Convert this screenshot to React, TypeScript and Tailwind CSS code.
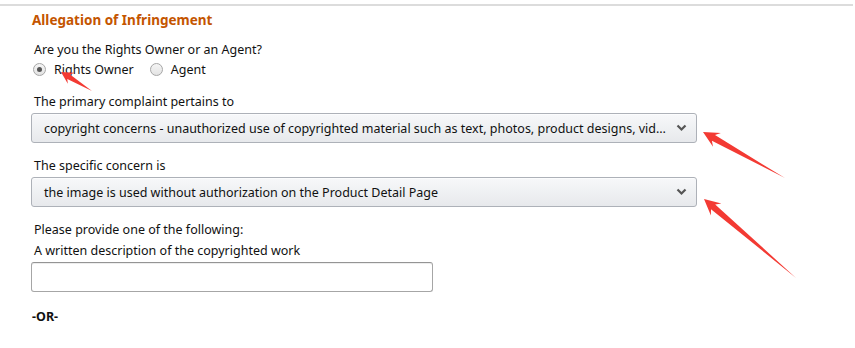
import React from 'react'

type Pt = [number, number]

// annotation arrow: tapered shaft from tail to tip with a swept head
function arrowPoints(tip: Pt, tail: Pt, head: number, half: number) {
  const dx = tip[0] - tail[0]
  const dy = tip[1] - tail[1]
  const len = Math.hypot(dx, dy)
  const ux = dx / len, uy = dy / len
  const nx = -uy, ny = ux
  const bx = tip[0] - ux * head, by = tip[1] - uy * head
  const nbx = tip[0] - ux * head * 0.75, nby = tip[1] - uy * head * 0.75
  const shaft = half * 0.4
  const pts: Pt[] = [
    tail,
    [nbx + nx * shaft, nby + ny * shaft],
    [bx + nx * half, by + ny * half],
    tip,
    [bx - nx * half, by - ny * half],
    [nbx - nx * shaft, nby - ny * shaft],
  ]
  return pts.map(p => p[0].toFixed(1) + ',' + p[1].toFixed(1)).join(' ')
}

const arrows: { tip: Pt; tail: Pt; head: number; half: number }[] = [
  { tip: [61, 72], tail: [92, 91], head: 12, half: 6.5 },
  { tip: [703, 132], tail: [785, 178], head: 16, half: 8 },
  { tip: [704, 199], tail: [796, 278], head: 16, half: 8 },
]

function Chevron() {
  return (
    <svg width="11" height="8" viewBox="0 0 11 8" fill="none">
      <path d="M1.5 1.5 L5.5 5.5 L9.5 1.5" stroke="#555" strokeWidth="2.2" />
    </svg>
  )
}

function Select({ value }: { value: string }) {
  return (
    <div className="mt-[2px] w-[666px] h-[30px] rounded-[3px] border border-[#adb1b8] bg-gradient-to-b from-[#f7f8fa] to-[#e7e9ec] flex items-center pl-[12px] pr-[9px] shadow-[0_1px_0_rgba(255,255,255,0.6)_inset]">
      <span className="flex-1 whitespace-nowrap text-[#111]">{value}</span>
      <Chevron />
    </div>
  )
}

function Radio({ checked, label }: { checked?: boolean; label: string }) {
  return (
    <label className="flex items-center gap-[8px]">
      <span className="w-[13px] h-[13px] rounded-full border border-[#a6a6a6] bg-gradient-to-b from-[#f5f5f5] to-[#e3e3e3] flex items-center justify-center">
        {checked && <span className="w-[5px] h-[5px] rounded-full bg-[#555]" />}
      </span>
      <span>{label}</span>
    </label>
  )
}

export default function App() {
  return (
    <div className="relative w-[855px] h-[348px] bg-white overflow-hidden text-[#111] text-[12.5px] leading-[19px] font-['Noto_Sans',sans-serif]">
      <div className="h-[2px] mt-[4px] mr-[2px] bg-[#dcdcdc]" />
      <div className="pl-[31px] flex flex-col items-start">
        <h2 className="mt-[4px] pl-[1px] text-[13.5px] leading-[20px] font-bold text-[#c45500]">Allegation of Infringement</h2>
        <div className="mt-[10px] pl-[3px]">Are you the Rights Owner or an Agent?</div>
        <div className="mt-[1px] pl-[2px] flex items-center gap-[16px]">
          <Radio checked label="Rights Owner" />
          <Radio label="Agent" />
        </div>
        <div className="mt-[13px] pl-[3px]">The primary complaint pertains to</div>
        <Select value="copyright concerns - unauthorized use of copyrighted material such as text, photos, product designs, vid…" />
        <div className="mt-[13px] pl-[3px]">The specific concern is</div>
        <Select value="the image is used without authorization on the Product Detail Page" />
        <div className="mt-[13px] pl-[3px]">Please provide one of the following:</div>
        <div className="mt-[2px] pl-[3px]">A written description of the copyrighted work</div>
        <input className="mt-[2px] w-[402px] h-[30px] rounded-[3px] border border-[#a6a6a6] border-t-[#949494] bg-white shadow-[0_1px_0_rgba(0,0,0,0.07)_inset] outline-none" />
        <div className="mt-[15px] pl-[1px] font-bold">-OR-</div>
      </div>
      <svg className="absolute left-0 top-0 pointer-events-none" width="855" height="348">
        {arrows.map((a, i) => (
          <polygon key={i} points={arrowPoints(a.tip, a.tail, a.head, a.half)} fill="#f33a33" />
        ))}
      </svg>
    </div>
  )
}
